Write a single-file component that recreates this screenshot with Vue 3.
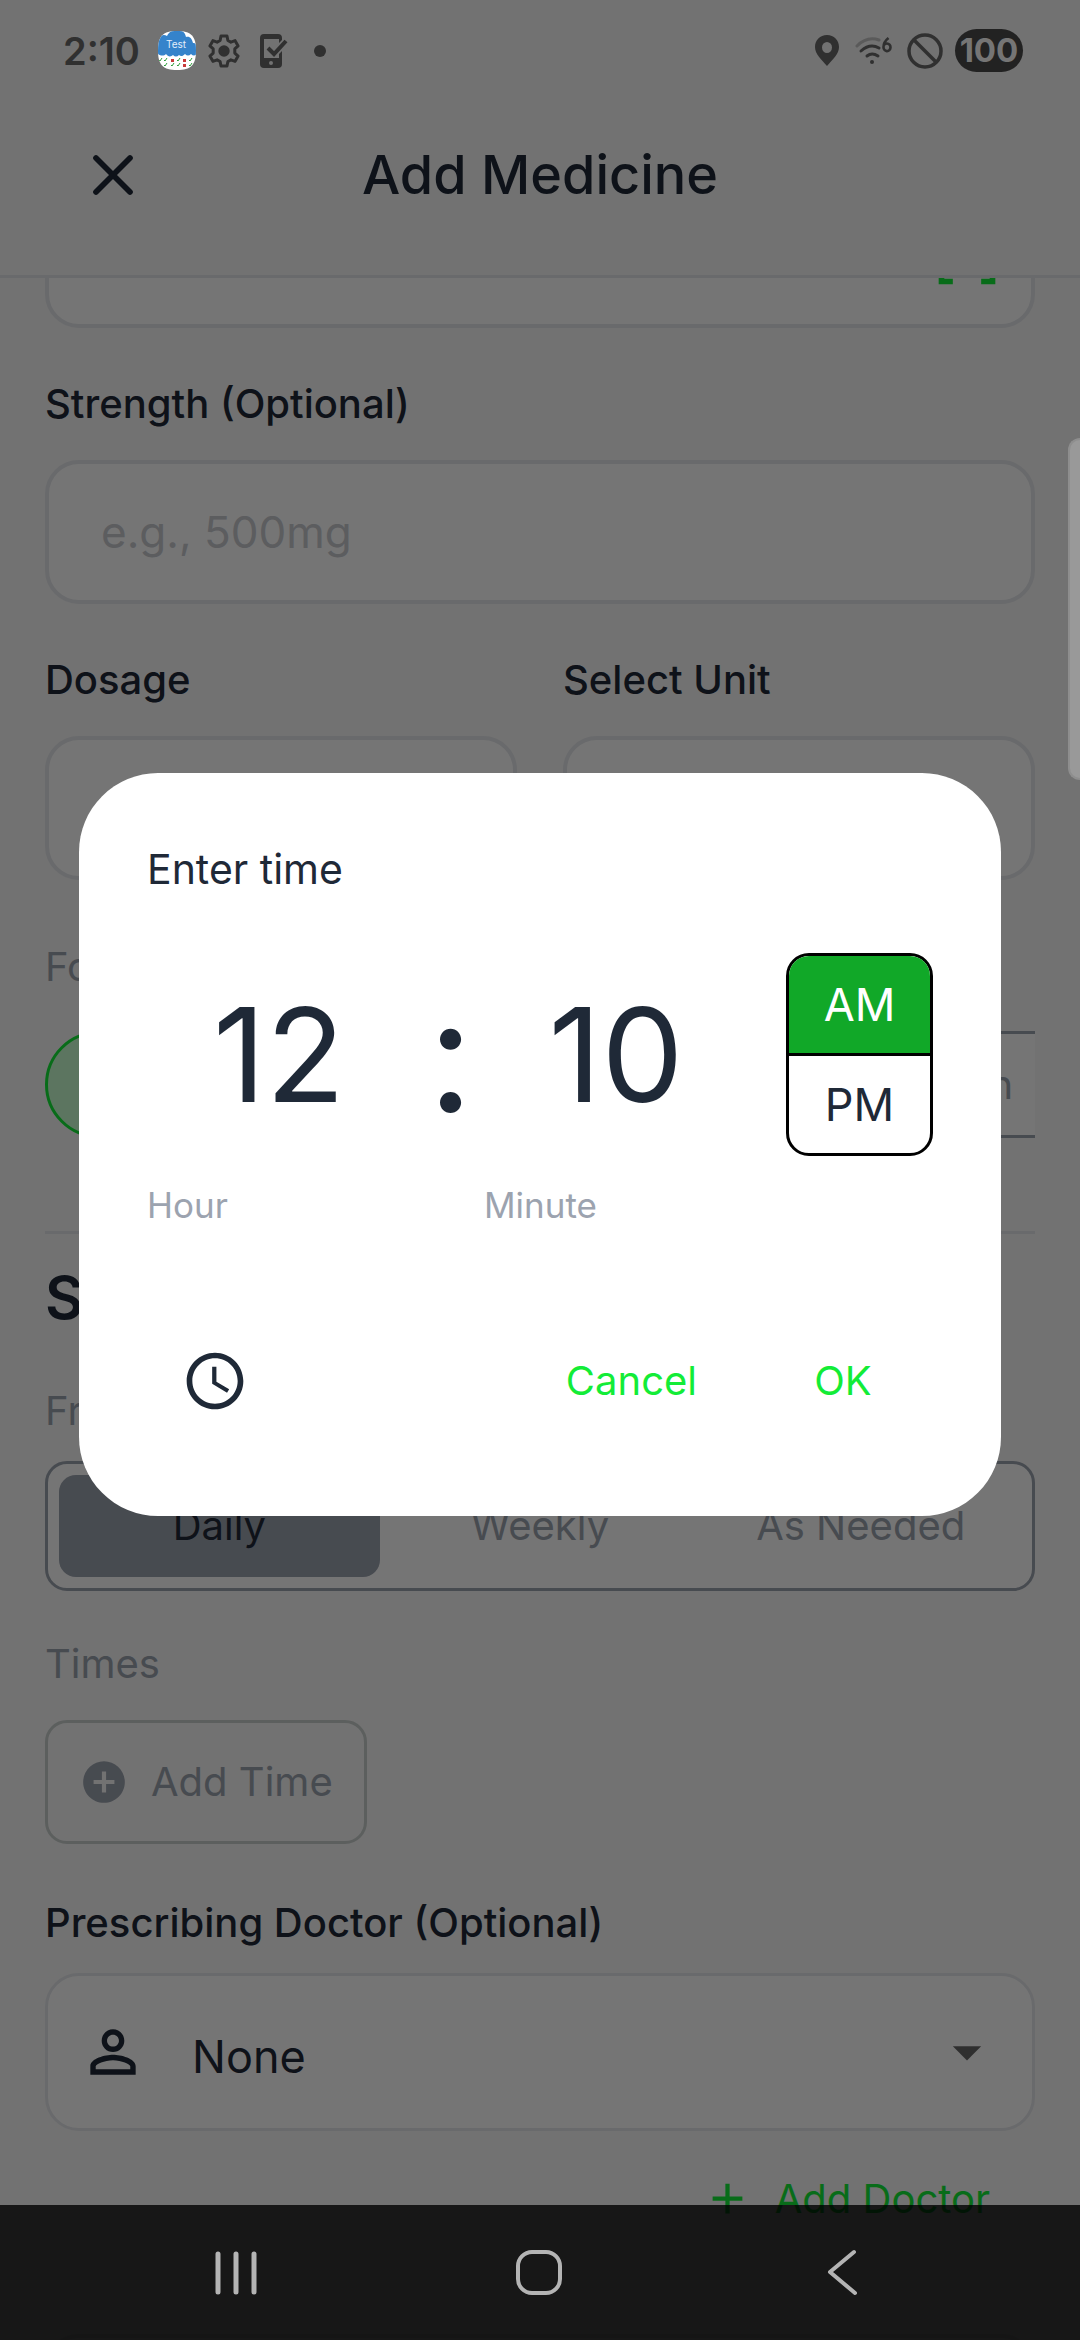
<script setup>
import { ref } from 'vue'

const strength = ref('')
const dosage = ref('')
const unit = ref('')
const doctor = ref('None')
const hour = ref('12')
const minute = ref('10')
const period = ref('AM')
const form = ref('Tablet')
const forms = ['Tablet', 'Capsule', 'Liquid', 'Injection']
const frequency = ref('Daily')
const frequencies = ['Daily', 'Weekly', 'As Needed']
</script>

<template>
  <div class="screen">
    <div class="page">
      <header class="app-bar">
        <button class="close" type="button" aria-label="Close">
          <svg viewBox="0 0 24 24" width="68" height="68"><path d="M6 6l12 12M18 6L6 18" fill="none" stroke="currentColor" stroke-width="2" stroke-linecap="round" /></svg>
        </button>
        <h1>Add Medicine</h1>
      </header>

      <main class="scroller">
        <form class="form" @submit.prevent>
          <div class="field with-icon name-field">
            <input type="text" aria-label="Medicine name" />
            <svg class="scan" viewBox="0 0 24 24" width="68" height="68"><path d="M9.500 6.500v3h-3v-3h3M11 5H5v6h6V5zM9.500 14.500v3h-3v-3h3M11 13H5v6h6v-6zM17.500 6.500v3h-3v-3h3M19 5h-6v6h6V5zM22 7h-2V4h-3V2h5v5zM22 22v-5h-2v3h-3v2h5zM2 22h5v-2H4v-3H2v5zM2 2v5h2V4h3V2H2z" fill="currentColor" /></svg>
          </div>

          <label class="label" for="strength">Strength (Optional)</label>
          <div class="field">
            <input id="strength" v-model="strength" type="text" placeholder="e.g., 500mg" />
          </div>

          <div class="columns">
            <div class="column">
              <label class="label" for="dosage">Dosage</label>
              <div class="field"><input id="dosage" v-model="dosage" type="text" /></div>
            </div>
            <div class="column">
              <label class="label" for="unit">Select Unit</label>
              <div class="field with-icon">
                <select id="unit" v-model="unit"><option value=""></option><option>mg</option></select>
                <svg class="arrow" viewBox="0 0 24 24" width="68" height="68"><path d="M7 10l5 5 5-5z" fill="currentColor" /></svg>
              </div>
            </div>
          </div>

          <p class="caption form-caption">Form</p>
          <div class="chips">
            <button v-for="item in forms" :key="item" type="button" class="chip" :class="{ active: item === form }" @click="form = item">{{ item }}</button>
          </div>

          <hr />
          <h2>Schedule</h2>

          <p class="caption frequency-caption">Frequency</p>
          <div class="segments">
            <button v-for="item in frequencies" :key="item" type="button" class="segment" :class="{ active: item === frequency }" @click="frequency = item">{{ item }}</button>
          </div>

          <p class="caption times-caption">Times</p>
          <button class="add-time" type="button">
            <svg viewBox="0 0 24 24" width="50" height="50"><path d="M12 2C6.480 2 2 6.480 2 12s4.480 10 10 10 10-4.480 10-10S17.520 2 12 2zm5 11h-4v4h-2v-4H7v-2h4V7h2v4h4v2z" fill="currentColor" /></svg>
            <span>Add Time</span>
          </button>

          <label class="label doctor-label" for="doctor">Prescribing Doctor (Optional)</label>
          <div class="doctor">
            <svg viewBox="0 0 24 24" width="68" height="68"><path d="M12 5.900c1.160 0 2.100.940 2.100 2.100s-.940 2.100-2.100 2.100S9.900 9.160 9.900 8s.940-2.100 2.100-2.100m0 9c2.970 0 6.100 1.460 6.100 2.100v1.100H5.900V17c0-.640 3.130-2.100 6.100-2.100M12 4C9.790 4 8 5.790 8 8s1.790 4 4 4 4-1.790 4-4-1.790-4-4-4zm0 9c-2.670 0-8 1.340-8 4v3h16v-3c0-2.660-5.330-4-8-4z" fill="currentColor" /></svg>
            <select id="doctor" v-model="doctor"><option>None</option></select>
            <svg class="arrow" viewBox="0 0 24 24" width="68" height="68"><path d="M7 10l5 5 5-5z" fill="currentColor" /></svg>
          </div>
          <button class="add-doctor" type="button">
            <svg viewBox="0 0 24 24" width="51" height="51"><path d="M19 13h-6v6h-2v-6H5v-2h6V5h2v6h6v2z" fill="currentColor" /></svg>
            <span>Add Doctor</span>
          </button>
          <div class="field next-field"><input type="text" aria-label="Notes" /></div>
        </form>
      </main>
    </div>

    <div class="scrim">
      <section class="dialog" role="dialog" aria-label="Enter time">
        <h3>Enter time</h3>
        <div class="time">
          <div class="unit">
            <input id="hour" v-model="hour" type="text" inputmode="numeric" />
            <label for="hour">Hour</label>
          </div>
          <span class="colon">:</span>
          <div class="unit">
            <input id="minute" v-model="minute" type="text" inputmode="numeric" />
            <label for="minute">Minute</label>
          </div>
          <div class="period">
            <button v-for="p in ['AM', 'PM']" :key="p" type="button" :class="{ active: p === period }" @click="period = p">{{ p }}</button>
          </div>
        </div>
        <div class="actions">
          <button class="dial" type="button" aria-label="Switch to dial">
            <svg viewBox="0 0 24 24" width="68" height="68"><path d="M11.990 2C6.470 2 2 6.480 2 12s4.470 10 9.990 10C17.520 22 22 17.520 22 12S17.520 2 11.990 2zM12 20c-4.420 0-8-3.580-8-8s3.580-8 8-8 8 3.580 8 8-3.580 8-8 8zm.5-13H11v6l5.250 3.150.750-1.230-4.500-2.670z" fill="currentColor" /></svg>
          </button>
          <button class="text-button" type="button">Cancel</button>
          <button class="text-button ok" type="button">OK</button>
        </div>
      </section>
    </div>

    <div class="status">
      <span class="clock">2:10</span>
      <svg class="test-app" viewBox="0 0 38 39" width="38" height="39">
        <defs><clipPath id="squircle"><path d="M19 0C33 0 38 5 38 19.500S33 39 19 39 0 34 0 19.500 5 0 19 0z" /></clipPath></defs>
        <g clip-path="url(#squircle)">
          <rect width="38" height="39" fill="#fff" />
          <path d="M0 9C2 4 6 3 9 5 11 1 14-1 19-1s8 2 9 7c4-1 6 2 7 6 2 0 3 1 4 3v8c-2 2-4 2-6 0-2 2-4 2-6 0-2 2-4 3-6 1-2 2-4 2-6 0-2 2-5 2-7-1-2 2-5 2-8 0z" fill="#3583cb" />
          <text x="18" y="17" text-anchor="middle" font-family="Inter, sans-serif" font-size="10" fill="#e3eefa">Test</text>
          <path d="M1 29l1 1 2-3M6 29l1 1 2-3M19 29l1 1 2-3M31 29l1 1 2-3M6 34l1 1 2-3M13 34l1 1 2-3M19 34l1 1 2-3M31 34l1 1 2-3" fill="none" stroke="#2f9c3d" stroke-width="1" />
          <path d="M13 28h3v3h-3zM25 28h3v3h-3zM25 33h3v3h-3z" fill="#c83a3a" />
        </g>
      </svg>
      <svg class="gear" viewBox="0 0 24 24" width="36" height="36"><path d="M10 2h4l.6 3 2 1.100 2.800-1 2 3.500-2.200 2v2.800l2.200 2-2 3.500-2.800-1-2 1.100-.6 3h-4l-.6-3-2-1.100-2.800 1-2-3.500 2.200-2v-2.800l-2.200-2 2-3.500 2.800 1 2-1.100z" fill="none" stroke="currentColor" stroke-width="2" stroke-linejoin="round" /><circle cx="12" cy="12" r="3.800" fill="currentColor" /></svg>
      <svg class="phone" viewBox="0 0 28 34" width="28" height="34"><path d="M4 0h14q4 0 4 4v2l-3 3V5H4v19h15v-4l3-3v13q0 4-4 4H4q-4 0-4-4V4q0-4 4-4z" fill="currentColor" /><path d="M8 14l6 6L26 7" fill="none" stroke="currentColor" stroke-width="4" /><circle cx="11" cy="29" r="2" fill="#727272" /></svg>
      <span class="dot"></span>
      <span class="spacer"></span>
      <svg class="pin" viewBox="0 0 24 31" width="24" height="31"><path fill-rule="evenodd" d="M12 0C5 0 0 5 0 12c0 7 6 12 12 19 6-7 12-12 12-19C24 5 19 0 12 0zm0 7a5 5.500 0 1 1 0 11 5 5.500 0 1 1 0-11z" fill="currentColor" /></svg>
      <svg class="wifi" viewBox="0 0 38 28" width="38" height="28">
        <path d="M2 9Q12-1 24 3" fill="none" stroke="#5a5a5a" stroke-width="3" stroke-linecap="round" />
        <path d="M6 14q9-8 18-3M12 19q5-4 11 0" fill="none" stroke="currentColor" stroke-width="3" stroke-linecap="round" />
        <circle cx="17" cy="25" r="2" fill="currentColor" />
        <path d="M33.500 1q-5 4-5 9a3.500 3.800 0 1 0 3.500-3.500q-2 0-3 1.500" fill="none" stroke="currentColor" stroke-width="2.600" />
      </svg>
      <svg class="blocked" viewBox="0 0 36 36" width="36" height="36"><circle cx="18" cy="18" r="16" fill="none" stroke="currentColor" stroke-width="3.500" /><path d="M7 7l22 22" stroke="currentColor" stroke-width="3.500" /></svg>
      <span class="battery">100</span>
    </div>

    <div class="edge-handle"></div>

    <nav class="nav">
      <button type="button" aria-label="Recents"><svg viewBox="0 0 60 60" width="60" height="60"><path d="M12 11v38M30 11v38M48 11v38" fill="none" stroke="currentColor" stroke-width="5" stroke-linecap="round" /></svg></button>
      <button type="button" aria-label="Home"><svg viewBox="0 0 60 60" width="60" height="60"><rect x="9" y="9" width="42" height="41" rx="14" fill="none" stroke="currentColor" stroke-width="4" /></svg></button>
      <button type="button" aria-label="Back"><svg viewBox="0 0 60 60" width="60" height="60"><path d="M42 9L18 29l25 21" fill="none" stroke="currentColor" stroke-width="4" stroke-linecap="round" stroke-linejoin="round" /></svg></button>
    </nav>
  </div>
</template>

<style>
body {
  background: #f8f8f8;
}
</style>

<style scoped>
.screen {
  position: relative;
  height: 100vh;
  overflow: hidden;
  font-family: Inter, "Liberation Sans", sans-serif;
  font-size: 40px;
  line-height: 48px;
  color: #1f2937;
}
.screen *,
.screen {
  box-sizing: border-box;
}
button,
input,
select {
  font: inherit;
  color: inherit;
  background: none;
  border: 0;
  padding: 0;
  margin: 0;
  outline: 0;
  appearance: none;
}
svg {
  display: block;
  flex: none;
}
h1,
h2,
h3,
p {
  margin: 0;
}
.page {
  display: flex;
  flex-direction: column;
  height: 100%;
  background: #f8f8f8;
}
.app-bar {
  flex: none;
  display: grid;
  grid-template-columns: 135px 1fr 135px;
  align-items: center;
  height: 278px;
  padding: 74px 45px 0;
  border-bottom: 3px solid #e5e7eb;
}
.app-bar h1 {
  font-size: 54px;
  line-height: 72px;
  font-weight: 500;
  text-align: center;
}
.close {
  display: grid;
  place-items: center;
  height: 135px;
}
.scroller {
  flex: 1;
  min-height: 0;
  overflow: hidden;
  padding: 0 45px;
}
.form {
  display: flex;
  flex-direction: column;
}
.name-field {
  margin-top: -94px;
}
.field {
  display: flex;
  align-items: center;
  flex: none;
  height: 144px;
  border: 4px solid #e5e7eb;
  border-radius: 34px;
  background: #fff;
}
.field input,
.field select {
  flex: 1;
  min-width: 0;
  height: 100%;
  padding: 0 52px;
  font-size: 44px;
}
.field input::placeholder {
  color: #c8cad0;
  opacity: 1;
}
.with-icon {
  padding-right: 30px;
}
.scan,
.add-doctor {
  color: #13ec37;
}
.arrow {
  color: #686868;
}
.label {
  margin: 52px 0 32px;
  font-weight: 500;
}
.columns {
  display: flex;
  gap: 46px;
}
.column {
  flex: 1;
  min-width: 0;
  display: flex;
  flex-direction: column;
}
.caption {
  color: #9ca3af;
}
.form-caption {
  margin: 63px 0 40px;
}
.chips {
  display: flex;
  gap: 29px;
  overflow: hidden;
}
.chip {
  flex: none;
  height: 107px;
  padding: 0 45px;
  border: 3px solid #9ca3af;
  border-radius: 22px;
  background: #fff;
  color: #9ca3af;
}
.chip.active {
  border-color: #13ec37;
  border-radius: 54px;
  background: #c8fed1;
  color: #1f2937;
}
hr {
  width: 100%;
  height: 3px;
  margin: 93px 0 28px;
  border: 0;
  background: #e5e7eb;
}
h2 {
  font-size: 59px;
  line-height: 72px;
  font-weight: 600;
}
.frequency-caption {
  margin: 53px 0 26px;
}
.segments {
  display: flex;
  height: 130px;
  padding: 11px;
  border: 3px solid #9ca3af;
  border-radius: 22px;
  background: #fff;
}
.segment {
  flex: 1;
  border-radius: 17px;
  color: #9ca3af;
}
.segment.active {
  background: #9ca3af;
  color: #1f2937;
}
.times-caption {
  margin: 49px 0 32px;
}
.add-time {
  align-self: flex-start;
  display: flex;
  align-items: center;
  gap: 22px;
  height: 124px;
  padding: 0 31px;
  border: 3px solid #c9cfcd;
  border-radius: 22px;
  color: #9ca3af;
}
.doctor-label {
  margin: 55px 0 26px;
}
.doctor {
  display: flex;
  align-items: center;
  height: 158px;
  padding: 0 31px;
  border: 3px solid #e5e7eb;
  border-radius: 34px;
  background: #fff;
}
.doctor select {
  flex: 1;
  height: 100%;
  padding: 10px 45px 0;
  font-size: 45px;
}
.add-doctor {
  align-self: flex-end;
  display: flex;
  align-items: center;
  gap: 22px;
  height: 135px;
  padding: 0 45px;
}
.next-field {
  margin-top: 68px;
}
.scrim {
  position: absolute;
  inset: 0;
  display: flex;
  align-items: center;
  padding: 84px 79px 135px;
  background: rgba(0, 0, 0, 0.54);
}
.dialog {
  flex: 1;
  padding: 72px 68px 68px;
  border-radius: 79px;
  background: #fff;
}
h3 {
  font-size: 41px;
  font-weight: 400;
}
.time {
  display: flex;
  margin-top: 60px;
}
.unit {
  display: flex;
  flex-direction: column;
  gap: 29px;
  width: 270px;
}
.unit input {
  width: 100%;
  height: 203px;
  padding-right: 6px;
  text-align: center;
  font-size: 130px;
}
.unit label {
  font-size: 35px;
  line-height: 40px;
  color: #9ca3af;
}
.colon {
  display: flex;
  justify-content: center;
  width: 67px;
  font-size: 160px;
  line-height: 203px;
}
.period {
  display: flex;
  flex-direction: column;
  width: 147px;
  height: 203px;
  margin-left: auto;
  border: 3px solid #000;
  border-radius: 23px;
  overflow: hidden;
}
.period button {
  flex: 1;
  font-size: 45px;
}
.period button + button {
  border-top: 3px solid #000;
}
.period .active {
  background: #11a828;
  color: #fff;
}
.actions {
  display: flex;
  align-items: center;
  height: 135px;
  margin-top: 88px;
  color: #13ec37;
}
.dial {
  display: grid;
  place-items: center;
  width: 135px;
  height: 135px;
  margin-right: auto;
  color: #1f2937;
}
.text-button {
  height: 112px;
  padding: 0 34px;
}
.ok {
  min-width: 180px;
  margin-left: 22px;
}
.status {
  position: absolute;
  inset: 0 0 auto;
  display: flex;
  align-items: center;
  height: 101px;
  padding: 0 57px 0 63px;
  color: #303030;
}
.clock {
  font-size: 38px;
  font-weight: 600;
}
.test-app {
  margin-left: 18px;
}
.gear {
  margin-left: 10px;
}
.phone {
  margin-left: 18px;
}
.dot {
  width: 12px;
  height: 12px;
  margin-left: 26px;
  border-radius: 50%;
  background: currentColor;
}
.spacer {
  flex: 1;
}
.wifi {
  margin-left: 16px;
}
.blocked {
  margin-left: 14px;
}
.battery {
  margin-left: 12px;
  width: 68px;
  border-radius: 22px;
  background: #222;
  color: #757575;
  font-size: 33px;
  font-weight: 700;
  line-height: 43px;
  text-align: center;
}
.edge-handle {
  position: absolute;
  top: 438px;
  right: 0;
  width: 12px;
  height: 342px;
  border: 2px solid #8e8e8e;
  border-right: 0;
  border-radius: 12px 0 0 12px;
  background: #999;
}
.nav {
  position: absolute;
  inset: auto 0 0;
  display: flex;
  justify-content: center;
  height: 135px;
  padding: 0 86px 0 84px;
  background: rgba(0, 0, 0, 0.8);
  color: #b4b4b4;
}
.nav button {
  flex: 1;
  display: grid;
  place-items: center;
}
</style>
